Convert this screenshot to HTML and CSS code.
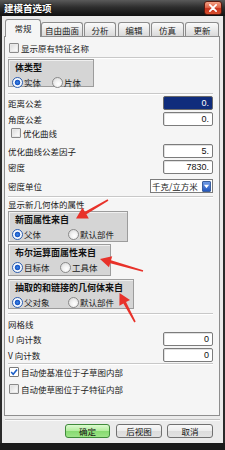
FILE: index.html
```html
<!DOCTYPE html>
<html>
<head>
<meta charset="utf-8">
<link rel="stylesheet" href="styles.css">
</head>
<body>
<div class="window">
  <div class="titlebar">
    <span class="title">建模首选项</span>
    <div class="close">
      <svg width="18" height="14" viewBox="0 0 18 14"><path d="M5.5 3.5 L12.5 10.5 M12.5 3.5 L5.5 10.5" stroke="#fff" stroke-width="2" stroke-linecap="round"/></svg>
    </div>
  </div>
  <div class="content">
    <div class="tabs">
      <div class="tab active tw1">常规</div>
      <div class="tab tw2">自由曲面</div>
      <div class="tab tw3">分析</div>
      <div class="tab tw4">编辑</div>
      <div class="tab tw5">仿真</div>
      <div class="tab tw6">更新</div>
    </div>
    <div class="panel">
      <div class="row cbrow m5"><span class="cb"></span><span>显示原有特征名称</span></div>
      <div class="sep m3"></div>
      <div class="group gw1 gh28">
        <div class="gtitle">体类型</div>
        <div class="radios">
          <span class="ritem rw40"><span class="rb on"></span>实体</span>
          <span class="ritem"><span class="rb"></span>片体</span>
        </div>
      </div>
      <div class="sep m6"></div>
      <div class="frow m1"><span>距离公差</span><span class="field sel">0.</span></div>
      <div class="frow m2"><span>角度公差</span><span class="field">0.</span></div>
      <div class="row cbrow m1 ind"><span class="cb"></span><span>优化曲线</span></div>
      <div class="frow m5"><span>优化曲线公差因子</span><span class="field">5.</span></div>
      <div class="frow m2"><span>密度</span><span class="field">7830.</span></div>
      <div class="frow m5"><span>密度单位</span>
        <span class="select"><span class="stext">千克/立方米</span><span class="sarrow"><svg width="8" height="12" viewBox="0 0 8 12"><path d="M1 4.5 L7 4.5 L4 8.5 Z" fill="#fff"/></svg></span></span>
      </div>
      <div class="sep m3"></div>
      <div class="row">显示新几何体的属性</div>
      <div class="group gw2 gh31 m1">
        <div class="gtitle">新面属性来自</div>
        <div class="radios">
          <span class="ritem rw56"><span class="rb on"></span>父体</span>
          <span class="ritem"><span class="rb"></span>默认部件</span>
        </div>
      </div>
      <div class="group gw3 gh32 m2">
        <div class="gtitle">布尔运算面属性来自</div>
        <div class="radios">
          <span class="ritem rw48"><span class="rb on"></span>目标体</span>
          <span class="ritem"><span class="rb"></span>工具体</span>
        </div>
      </div>
      <div class="group gw4 gh30 m3">
        <div class="gtitle">抽取的和链接的几何体来自</div>
        <div class="radios">
          <span class="ritem rw56"><span class="rb on"></span>父对象</span>
          <span class="ritem"><span class="rb"></span>默认部件</span>
        </div>
      </div>
      <div class="sep m4"></div>
      <div class="row m3">网格线</div>
      <div class="frow m2"><span>U 向计数</span><span class="field">0</span></div>
      <div class="frow m2"><span>V 向计数</span><span class="field">0</span></div>
      <div class="sep m1"></div>
      <div class="row cbrow m1"><span class="cb on"><svg width="10" height="10" viewBox="0 0 10 10"><path d="M1.5 5 L4 7.8 L8.8 1.8" stroke="#1c5fc8" stroke-width="2" fill="none"/></svg></span><span>自动使基准位于子草图内部</span></div>
      <div class="row cbrow m5"><span class="cb"></span><span>自动使草图位于子特征内部</span></div>
    </div>
    <div class="bsep"></div>
    <div class="buttons">
      <span class="btn ok">确定</span>
      <span class="btn b2">后视图</span>
      <span class="btn b3">取消</span>
    </div>
  </div>
</div>
<svg class="overlay" width="225" height="450" viewBox="0 0 225 450">
  <polygon fill="#e8322a" points="108.4,200.7 86.41,214.27 88.8,218.4 76,218.5 82.5,207.6 84.91,211.67 107.6,199.3"/>
  <polygon fill="#e8322a" points="143.2,270.3 111.03,260.31 112.2,256.2 100,259 109.0,267.3 110.21,263.19 142.8,271.7"/>
  <polygon fill="#e8322a" points="135.7,321.6 126.04,302.11 130.0,300.0 119.5,293 119.4,305.7 123.40,303.53 134.3,322.4"/>
</svg>
</body>
</html>
```
FILE: styles.css
```css
* { box-sizing: border-box; }
html, body { margin: 0; padding: 0; }
body {
  width: 225px;
  height: 450px;
  overflow: hidden;
  background: #1b1b1b;
  font-family: "Noto Sans CJK SC", "Liberation Sans", sans-serif;
  font-size: 8.5px;
  color: #1a1a1a;
}
.window {
  width: 225px;
  height: 443px;
  background: #ebebeb;
  border-left: 2px solid #2a2a2a;
  border-right: 2px solid #2a2a2a;
  display: flex;
  flex-direction: column;
}
.titlebar {
  height: 16px;
  flex: none;
  background: linear-gradient(#5a5a5a 0, #2e2e2e 45%, #101010 100%);
  display: flex;
  align-items: center;
  justify-content: space-between;
  padding-left: 2px;
  margin: 0 -2px;
  padding-left: 4px;
  padding-right: 3px;
}
.title {
  color: #fff;
  font-weight: bold;
  font-size: 9.5px;
  line-height: 12px;
  text-shadow: 0 0 2px #000;
}
.close {
  width: 18px;
  height: 14px;
  border-radius: 3px;
  border: 1px solid #5a1a10;
  background: linear-gradient(#f4a184 0, #e0664a 45%, #c8321c 55%, #d8502e 100%);
  display: flex;
  align-items: center;
  justify-content: center;
}
.close svg { display: block; }
.content {
  flex: 1;
  display: flex;
  flex-direction: column;
  padding: 0 3px 0 2px;
}
.tabs {
  height: 20px;
  flex: none;
  display: flex;
  align-items: flex-end;
  position: relative;
  z-index: 1;
}
.tab {
  height: 14px;
  border: 1px solid #8c8c8c;
  border-bottom: none;
  border-radius: 3px 3px 0 0;
  background: linear-gradient(#fafafa 0, #eaeaea 50%, #dadada 100%);
  display: flex;
  align-items: center;
  justify-content: center;
  line-height: 12px;
  color: #222;
}
.tab.active {
  height: 18px;
  margin-bottom: -1px;
  background: #f5f5f5;
  padding-bottom: 2px;
}
.tw1 { width: 36px; margin-left: 1px; }
.tw2 { width: 42px; }
.tw3 { width: 32px; margin-left: 1px; }
.tw4 { width: 32px; margin-left: 2px; }
.tw5 { width: 33px; margin-left: 1px; }
.tw6 { width: 34px; margin-left: 1px; }
.panel {
  width: 216px;
  height: 380px;
  flex: none;
  border: 1px solid #8e8e8e;
  background: #f5f5f5;
  padding: 0 6px 0 3px;
  display: flex;
  flex-direction: column;
}
.row {
  height: 12px;
  display: flex;
  align-items: center;
  line-height: 12px;
  flex: none;
}
.cbrow { gap: 2px; padding-left: 1px; }
.cbrow.ind { padding-left: 3px; }
.cb {
  width: 10px;
  height: 10px;
  border: 1px solid #8a8a8a;
  border-radius: 1px;
  background: linear-gradient(135deg, #d8d8d8 0, #f2f2f2 60%, #ffffff 100%);
  box-shadow: inset 0 0 0 1px #e8e8e8;
  flex: none;
  display: flex;
  align-items: center;
  justify-content: center;
}
.cb.on { background: #fff; box-shadow: none; border-color: #7a7a7a; }
.cb svg { display: block; }
.sep {
  height: 2px;
  flex: none;
  border-top: 1px solid #c8c8c8;
  border-bottom: 1px solid #ffffff;
}
.m1 { margin-top: 1px; }
.m2 { margin-top: 2px; }
.m3 { margin-top: 3px; }
.m4 { margin-top: 4px; }
.m5 { margin-top: 5px; }
.m6 { margin-top: 6px; }
.group {
  flex: none;
  border: 1px solid #9c9c9c;
  box-shadow: inset 1px 1px 0 #efefef;
  background: #d5d5d5;
  padding: 2px 0 0 3px;
  display: flex;
  flex-direction: column;
  gap: 2px;
}
.gw1 { width: 86px; }
.gw2 { width: 120px; }
.gw3 { width: 103px; }
.gw4 { width: 126px; }
.gh28 { height: 28px; }
.gh30 { height: 30px; }
.gh31 { height: 31px; }
.gh32 { height: 32px; }
.gtitle {
  height: 12px;
  line-height: 12px;
  font-weight: bold;
  font-size: 9px;
  padding-left: 3px;
  color: #111;
  white-space: nowrap;
}
.radios {
  height: 12px;
  display: flex;
  align-items: center;
}
.ritem {
  display: flex;
  align-items: center;
  gap: 1px;
  line-height: 12px;
  white-space: nowrap;
}
.rw40 { width: 40px; }
.rw48 { width: 48px; }
.rw56 { width: 56px; }
.rb {
  width: 11px;
  height: 11px;
  border-radius: 50%;
  border: 1px solid #8a8a8a;
  background: radial-gradient(circle at 60% 65%, #ffffff 0, #f2f2f2 40%, #d2d2d2 100%);
  flex: none;
}
.rb.on {
  border-color: #2f5fb0;
  background: radial-gradient(circle, #3d86e6 0, #1a56c4 2.4px, #ffffff 3.2px, #dfeaf8 100%);
}
.frow {
  height: 14px;
  flex: none;
  display: flex;
  align-items: center;
  justify-content: space-between;
  line-height: 12px;
}
.field {
  width: 50px;
  height: 14px;
  border: 1px solid #7c7c7c;
  border-radius: 2px;
  background: #fff;
  box-shadow: inset 1px 1px 0 #e0e0e0;
  text-align: right;
  padding-right: 3px;
  font-family: "Liberation Sans", sans-serif;
  font-size: 9px;
  line-height: 12px;
  color: #111;
}
.field.sel {
  background: #0f2c7c;
  color: #fff;
  box-shadow: none;
  border-color: #6a6a6a;
}
.select {
  width: 63px;
  height: 14px;
  border: 1px solid #7c7c7c;
  background: #fff;
  display: flex;
  align-items: center;
  justify-content: space-between;
  padding: 0 1px 0 1px;
}
.stext { line-height: 12px; white-space: nowrap; }
.sarrow {
  width: 9px;
  height: 11px;
  background: linear-gradient(#6e9ae6, #2458c0);
  border: 1px solid #3b5f9e;
  border-radius: 1px;
  display: flex;
  align-items: center;
  justify-content: center;
}
.sarrow svg { display: block; }
.bsep {
  flex: none;
  height: 2px;
  margin-top: 3px;
  margin-left: 1px;
  border-top: 1px solid #c0c0c0;
  border-bottom: 1px solid #fafafa;
}
.buttons {
  flex: none;
  margin-top: 3px;
  height: 14px;
  display: flex;
  justify-content: flex-end;
  gap: 5px;
  padding-right: 7px;
}
.btn {
  width: 46px;
  height: 14px;
  border: 1px solid #707070;
  border-radius: 3px;
  background: linear-gradient(#f8f8f8 0, #ececec 50%, #dcdcdc 51%, #e2e2e2 100%);
  display: flex;
  align-items: center;
  justify-content: center;
  line-height: 12px;
  color: #111;
}
.btn.ok {
  width: 45px;
  margin-right: 1px;
  border-color: #3f8a3a;
  background: linear-gradient(#dcfad0 0, #b2ec9c 50%, #86da70 51%, #9ee488 100%);
}
.overlay {
  position: absolute;
  top: 0;
  left: 0;
  pointer-events: none;
}
```
